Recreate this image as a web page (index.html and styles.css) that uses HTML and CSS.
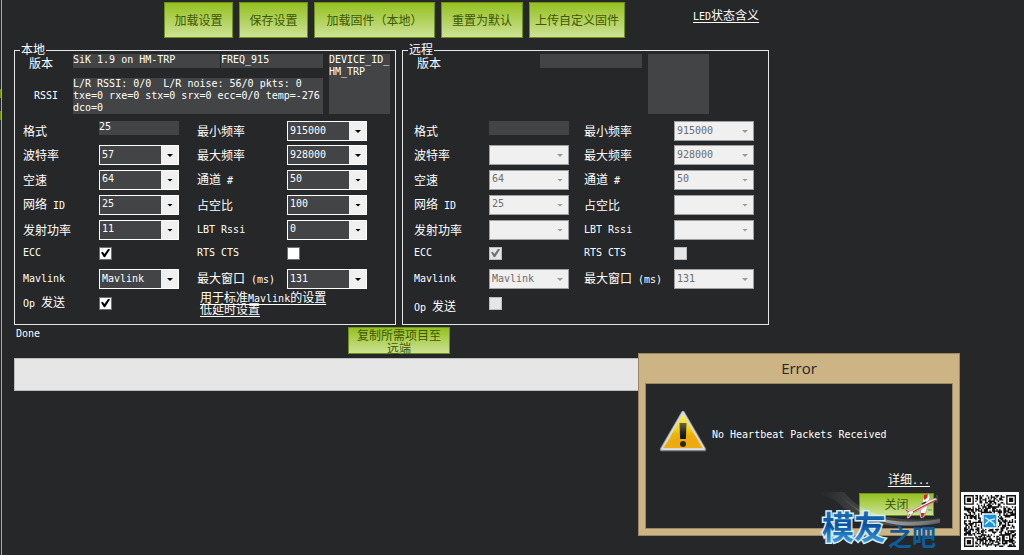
FILE: index.html
```
<!DOCTYPE html>
<html lang="zh-CN">
<head>
<meta charset="utf-8">
<title>SiK Radio</title>
<link rel="stylesheet" href="styles.css">
</head>
<body>
<main class="panel">
  <div class="toolbar">
    <button class="btn">加载设置</button>
    <button class="btn">保存设置</button>
    <button class="btn btn-wide">加载固件（本地）</button>
    <button class="btn btn-roomy">重置为默认</button>
    <button class="btn">上传自定义固件</button>
    <a class="led-link" href="#"><span class="en">LED</span>状态含义</a>
  </div>
  <div class="content">
    <div class="groups">
      <fieldset class="group">
        <legend>本地</legend>
        <div class="info info-local">
          <span class="info-label">版本</span>
          <output class="field field-version en">SiK 1.9 on HM-TRP</output>
          <output class="field en">FREQ_915</output>
          <output class="field field-device en">DEVICE_ID_<br>HM_TRP</output>
          <span class="info-label info-rssi en">RSSI</span>
          <output class="field field-rssi en">L/R RSSI: 0/0  L/R noise: 56/0 pkts: 0
txe=0 rxe=0 stx=0 srx=0 ecc=0/0 temp=-276
dco=0</output>
        </div>
        <div class="form form-local">
          <label for="l-format">格式</label>
          <output id="l-format" class="field field-format en">25</output>
          <label for="l-min">最小频率</label>
          <span class="combo"><select id="l-min"><option>915000</option></select></span>

          <label for="l-baud">波特率</label>
          <span class="combo"><select id="l-baud"><option>57</option></select></span>
          <label for="l-max">最大频率</label>
          <span class="combo"><select id="l-max"><option>928000</option></select></span>

          <label for="l-air">空速</label>
          <span class="combo"><select id="l-air"><option>64</option></select></span>
          <label for="l-chan">通道<span class="en"> #</span></label>
          <span class="combo"><select id="l-chan"><option>50</option></select></span>

          <label for="l-net">网络<span class="en"> ID</span></label>
          <span class="combo"><select id="l-net"><option>25</option></select></span>
          <label for="l-duty">占空比</label>
          <span class="combo"><select id="l-duty"><option>100</option></select></span>

          <label for="l-power">发射功率</label>
          <span class="combo"><select id="l-power"><option>11</option></select></span>
          <label for="l-lbt" class="en">LBT Rssi</label>
          <span class="combo"><select id="l-lbt"><option>0</option></select></span>

          <label for="l-ecc" class="en">ECC</label>
          <input type="checkbox" id="l-ecc" checked>
          <label for="l-rts" class="en">RTS CTS</label>
          <input type="checkbox" id="l-rts">

          <label for="l-mav" class="en">Mavlink</label>
          <span class="combo"><select id="l-mav"><option>Mavlink</option></select></span>
          <label for="l-win">最大窗口<span class="en"> (ms)</span></label>
          <span class="combo"><select id="l-win"><option>131</option></select></span>

          <label for="l-op"><span class="en">Op </span>发送</label>
          <input type="checkbox" id="l-op" checked>
          <div class="presets">
            <a href="#">用于标准<span class="en">Mavlink</span>的设置</a>
            <a href="#">低延时设置</a>
          </div>
        </div>
      </fieldset>

      <fieldset class="group">
        <legend>远程</legend>
        <div class="info info-remote">
          <span class="info-label">版本</span>
          <output class="field"></output>
          <output class="field field-device"></output>
        </div>
        <div class="form form-remote">
          <label for="r-format">格式</label>
          <output id="r-format" class="field field-format"></output>
          <label for="r-min">最小频率</label>
          <span class="combo"><select id="r-min" disabled><option>915000</option></select></span>

          <label for="r-baud">波特率</label>
          <span class="combo"><select id="r-baud" disabled><option></option></select></span>
          <label for="r-max">最大频率</label>
          <span class="combo"><select id="r-max" disabled><option>928000</option></select></span>

          <label for="r-air">空速</label>
          <span class="combo"><select id="r-air" disabled><option>64</option></select></span>
          <label for="r-chan">通道<span class="en"> #</span></label>
          <span class="combo"><select id="r-chan" disabled><option>50</option></select></span>

          <label for="r-net">网络<span class="en"> ID</span></label>
          <span class="combo"><select id="r-net" disabled><option>25</option></select></span>
          <label for="r-duty">占空比</label>
          <span class="combo"><select id="r-duty" disabled><option></option></select></span>

          <label for="r-power">发射功率</label>
          <span class="combo"><select id="r-power" disabled><option></option></select></span>
          <label for="r-lbt" class="en">LBT Rssi</label>
          <span class="combo"><select id="r-lbt" disabled><option></option></select></span>

          <label for="r-ecc" class="en">ECC</label>
          <input type="checkbox" id="r-ecc" checked disabled>
          <label for="r-rts" class="en">RTS CTS</label>
          <input type="checkbox" id="r-rts" disabled>

          <label for="r-mav" class="en">Mavlink</label>
          <span class="combo"><select id="r-mav" disabled><option>Mavlink</option></select></span>
          <label for="r-win">最大窗口<span class="en"> (ms)</span></label>
          <span class="combo"><select id="r-win" disabled><option>131</option></select></span>

          <label for="r-op" class="label-low"><span class="en">Op </span>发送</label>
          <input type="checkbox" id="r-op" disabled>
        </div>
      </fieldset>
    </div>
    <div class="status">
      <span class="status-text en">Done</span>
      <button class="btn btn-copy">复制所需项目至远端</button>
    </div>
    <progress class="bar" value="0" max="100" aria-label="Progress"></progress>
  </div>
</main>

<section class="dialog" role="alertdialog" aria-labelledby="dialog-title">
  <h1 class="dialog-title" id="dialog-title">Error</h1>
  <div class="dialog-body">
    <div class="dialog-message">
      <svg class="warning" viewBox="0 0 48 42" aria-hidden="true">
        <defs>
          <linearGradient id="amber" x1="0" y1="0" x2="0" y2="1"><stop offset="0" stop-color="#fff34a"/><stop offset=".45" stop-color="#f7d708"/><stop offset=".6" stop-color="#eab308"/><stop offset="1" stop-color="#f6b21a"/></linearGradient>
          <linearGradient id="mark" x1="0" y1="0" x2="0" y2="1"><stop offset="0" stop-color="#6a6450"/><stop offset=".6" stop-color="#222"/><stop offset="1" stop-color="#111"/></linearGradient>
        </defs>
        <path d="M24 2.5 45.500 39.500H2.500Z" fill="#8a8a8a" stroke="#8a8a8a" stroke-width="3.500" stroke-linejoin="round"/>
        <path d="M24 2.500 45 39H3Z" fill="url(#amber)" stroke="#dadada" stroke-width="2.200" stroke-linejoin="round"/>
        <path d="M4 36.500C16 25 30 24 37 26L44 38H4Z" fill="#e89d0a" opacity=".35"/>
        <path d="M20.500 13h7l-.6 16h-5.800Z" fill="url(#mark)"/>
        <circle cx="24" cy="34" r="3" fill="#29261c"/>
      </svg>
      <span class="message-text en">No Heartbeat Packets Received</span>
    </div>
    <div class="dialog-actions">
      <a href="#">详细<span class="en">...</span></a>
      <button class="btn btn-close">关闭</button>
    </div>
  </div>
</section>

<svg class="brand" viewBox="0 0 124 64" aria-label="模友之吧">
  <defs>
    <linearGradient id="sky" x1="0" y1="0" x2="0" y2="1"><stop offset="0" stop-color="#2a86cc"/><stop offset=".5" stop-color="#0b4f9c"/><stop offset="1" stop-color="#48b4ee"/></linearGradient>
    <linearGradient id="trail" x1="0" y1="0" x2="1" y2="0"><stop offset="0" stop-color="#fff" stop-opacity="0"/><stop offset=".45" stop-color="#fff" stop-opacity=".6"/><stop offset="1" stop-color="#fff" stop-opacity=".3"/></linearGradient>
  </defs>
  <path d="M2 2H26C42 22 70 34 122 28V31C78 42 44 34 26 18 18 10 10 6 2 5Z" fill="url(#trail)" opacity=".3"/>
  <path d="M20 2C38 24 70 38 122 29V33C76 42 40 28 20 2Z" fill="url(#trail)" opacity=".8"/>
  <text class="brand-main" x="4" y="49">模友</text>
  <text class="brand-sub" x="70" y="56">之吧</text>
  <g stroke-linejoin="round">
    <path d="M106 6 108 4 111 4 112 7 109 19 106 27 103 28 102 26 103 18 104 13Z" fill="#fff" stroke="#8a8a8a" stroke-width=".6"/>
    <path d="M106 5 110 4 109 8 106 10ZM103 23 107 23 105 27 103 27Z" fill="#d9231c"/>
    <path d="M87 19 89 19 93 21 103 15 112 10 118 8 119 10 112 14 102 20 95 23 91 28 89 28 90 23Z" fill="#f2f2f2" stroke="#8a8a8a" stroke-width=".6"/>
    <path d="M95 22 104 17 118 10" fill="none" stroke="#d9231c" stroke-width="1.300"/>
    <path d="M88 20 91 22M90 27 92 24" stroke="#d9231c"/>
    <path d="M104 14 108 12" stroke="#333" stroke-width="1.500"/>
    <path d="M119 5V13M110 20H114" stroke="#666" stroke-width=".8"/>
  </g>
</svg>

<div class="qr">
  <svg id="qr" viewBox="0 0 37 37" aria-label="QR">
    <path id="qr-dots" fill="#111"/>
    <path d="M13 13H24V24H13Z" fill="#fff"/>
    <path d="M14 14H23V23H14Z" fill="#1c93dc"/>
    <path d="M15 16 21 20 22 22M15 21 18 18 22 17" fill="none" stroke="#d6f0ff"/>
  </svg>
</div>
<script src="qr.js"></script>
</body>
</html>
```
FILE: qr.js
```
// Fills the 37x37 code: three finder squares, one alignment square, data dots between.
(function () {
  var size = 37, seed = 20, d = "";
  function ring(x, y, cx, cy, r) {
    var dist = Math.max(Math.abs(x - cx), Math.abs(y - cy));
    return dist <= r ? dist : -1;
  }
  for (var y = 0; y < size; y++) {
    for (var x = 0; x < size; x++) {
      seed = (seed * 1103515245 + 12345) % 2147483648;
      var on = seed / 2147483648 < 0.54;
      [[3, 3], [33, 3], [3, 33]].forEach(function (c) {
        var r = ring(x, y, c[0], c[1], 4);
        if (r >= 0) on = r === 3 || r <= 1;
      });
      var a = ring(x, y, 30, 30, 2);
      if (a >= 0) on = a !== 1;
      if (on) d += "M" + x + " " + y + "h1v1h-1z";
    }
  }
  document.getElementById("qr-dots").setAttribute("d", d);
})();
```
FILE: styles.css
```
* {
  box-sizing: border-box;
}

body {
  margin: 0;
  min-height: 100vh;
  display: flex;
  background: #262728;
  color: #fff;
  font: 12px/12px "Noto Sans CJK SC", sans-serif;
}

.en,
select {
  font-family: "DejaVu Sans Mono", monospace;
  font-size: 10px;
  white-space: pre;
}

a {
  color: #fff;
  text-decoration: underline;
  text-underline-offset: 2px;
}

.panel {
  flex: 1;
  margin-left: 1px;
  padding: 2px 12px 0;
  border-left: 1px solid #a9a9a9;
}

.panel::before,
.panel::after {
  content: "";
  position: absolute;
  left: 0;
  top: 89px;
  width: 1px;
  height: 9px;
  background: #6b8a10;
}

.panel::after {
  top: 111px;
}

/* Toolbar */
.toolbar {
  display: flex;
  gap: 6px;
  padding-left: 150px;
}

.btn {
  height: 36px;
  padding: 0 5px 2px;
  border: 1px solid #6f9018;
  background: linear-gradient(#94c11f, #cde296);
  color: #405704;
  font: 12px/13px "Noto Sans CJK SC", sans-serif;
}

.toolbar .btn {
  min-width: 69px;
}

.toolbar .btn-wide,
.toolbar .btn-roomy {
  padding: 0 10px 2px;
}

.toolbar .btn-wide {
  min-width: 121px;
}

.led-link {
  margin: 7px 0 0 62px;
}

/* Groups */
.content {
  width: max-content;
  margin-top: 8px;
}

.groups {
  display: flex;
  gap: 6px;
}

.group {
  margin: 0;
  padding: 0 0 12px;
  border: 1px solid #e6e6e6;
}

.group legend {
  margin-left: 5px;
  padding: 0 1px;
  line-height: 6px;
  height: 8px;
}

.field {
  display: block;
  background: #434445;
}

.info {
  display: grid;
  grid-template-rows: 14px 36px;
  row-gap: 10px;
}

.info-local {
  grid-template-columns: 58px 148px 102px 67px;
  padding-right: 5px;
}

.info-remote {
  grid-template-columns: 137px 102px 67px;
}

.info-label {
  padding: 3px 0 0 14px;
}

.info-rssi {
  padding: 12px 0 0 19px;
}

.field-version {
  margin-right: 1px;
}

.field-rssi {
  grid-column: 2 / 4;
}

.field-device {
  grid-row: 1 / 3;
  grid-column: 4;
  margin-left: 6px;
}

.info-remote .field-device {
  grid-column: 3;
}

.form {
  display: grid;
  grid-template-rows: 24px 24px 25px 25px 25px 22px 30px 18px;
  align-items: center;
  margin-top: 5px;
}

.form-local {
  grid-template-columns: 76px 98px 90px 80px;
  padding-left: 8px;
}

.form-remote {
  grid-template-columns: 75px 95px 90px 80px;
  padding: 0 14px 0 11px;
}

.field-format {
  width: 80px;
  height: 14px;
  align-self: start;
  margin-top: 2px;
}

.label-low {
  align-self: end;
  margin-bottom: -2px;
}

.presets {
  grid-column: 3 / 5;
  display: flex;
  flex-direction: column;
  align-items: flex-start;
  height: 24px;
  margin: -3px 0;
  padding-left: 3px;
}

.presets a {
  height: 12px;
}

/* Controls */
.combo {
  position: relative;
  width: 80px;
  height: 20px;
}

.combo select {
  display: block;
  width: 100%;
  height: 100%;
  margin: 0;
  padding: 0 18px 2px 2px;
  appearance: none;
  border: 1px solid #fff;
  border-radius: 0;
  background: linear-gradient(to left, #f0f0f0 17px, #434445 17px);
  color: #fff;
  opacity: 1;
}

.combo::after {
  content: "";
  position: absolute;
  right: 6px;
  top: 9px;
  width: 6px;
  height: 3px;
  background: #000;
  clip-path: polygon(0 0, 100% 0, 50% 100%);
  pointer-events: none;
}

.combo select:disabled {
  border-color: #a0a0a0;
  background: #f0f0f0;
  color: #6d6d6d;
}

.combo:has(:disabled)::after {
  background: #999;
}

input[type="checkbox"] {
  width: 13px;
  height: 13px;
  margin: 0;
  appearance: none;
  border: 1px solid #707070;
  background: #fff;
}

input[type="checkbox"]:checked::before {
  content: "";
  display: block;
  width: 9px;
  height: 9px;
  margin: 1px;
  background: #000;
  clip-path: polygon(0 45%, 20% 35%, 38% 60%, 82% 0, 100% 10%, 45% 96%, 32% 96%);
}

input[type="checkbox"]:disabled {
  border-color: #bcbcbc;
  background: #e6e6e6;
}

input[type="checkbox"]:disabled:checked::before {
  background: #707070;
}

/* Status */
.status {
  display: grid;
  grid-template-columns: 334px 102px;
  padding-top: 2px;
}

.status-text {
  padding: 1px 2px;
}

.btn-copy {
  height: 27px;
}

.bar {
  display: block;
  width: 100%;
  height: 33px;
  margin-top: 4px;
  appearance: none;
  border: 1px solid #bcbcbc;
  background: #e6e6e6;
}

.bar::-webkit-progress-bar {
  background: #e6e6e6;
}

/* Dialog */
.dialog {
  position: absolute;
  left: 638px;
  top: 353px;
  width: 322px;
  padding: 0 6px 6px;
  border: 1px solid #9a8763;
  background: #cdb484;
}

.dialog-title {
  margin: 0;
  color: #262728;
  font: 15px/29px "Open Sans", sans-serif;
  text-align: center;
}

.dialog-body {
  display: flex;
  flex-direction: column;
  justify-content: space-between;
  height: 146px;
  padding: 26px 18px 12px 13px;
  border: 1px solid #9a8763;
  background: #262728;
}

.dialog-message {
  display: flex;
  align-items: center;
  gap: 5px;
}

.message-text {
  padding-top: 7px;
}

.warning {
  width: 48px;
  height: 42px;
}

.dialog-actions {
  display: flex;
  flex-direction: column;
  align-items: flex-end;
  gap: 6px;
}

.dialog-actions a {
  margin-right: 4px;
}

.btn-close {
  width: 75px;
  height: 23px;
}

/* Overlays */
.brand {
  position: absolute;
  left: 818px;
  top: 490px;
  width: 124px;
  height: 64px;
}

.brand text {
  font-family: "Noto Sans CJK SC", sans-serif;
  font-weight: 700;
}

.brand-main {
  font-size: 32px;
  fill: url(#sky);
  stroke: #d3efff;
  stroke-width: 3px;
  paint-order: stroke;
}

.brand-sub {
  font-size: 24px;
  fill: #0d5c9c;
}

.qr {
  position: absolute;
  left: 961px;
  top: 492px;
  width: 58px;
  height: 58px;
  padding: 3px;
  background: #fff;
}

.qr svg {
  display: block;
}
```
